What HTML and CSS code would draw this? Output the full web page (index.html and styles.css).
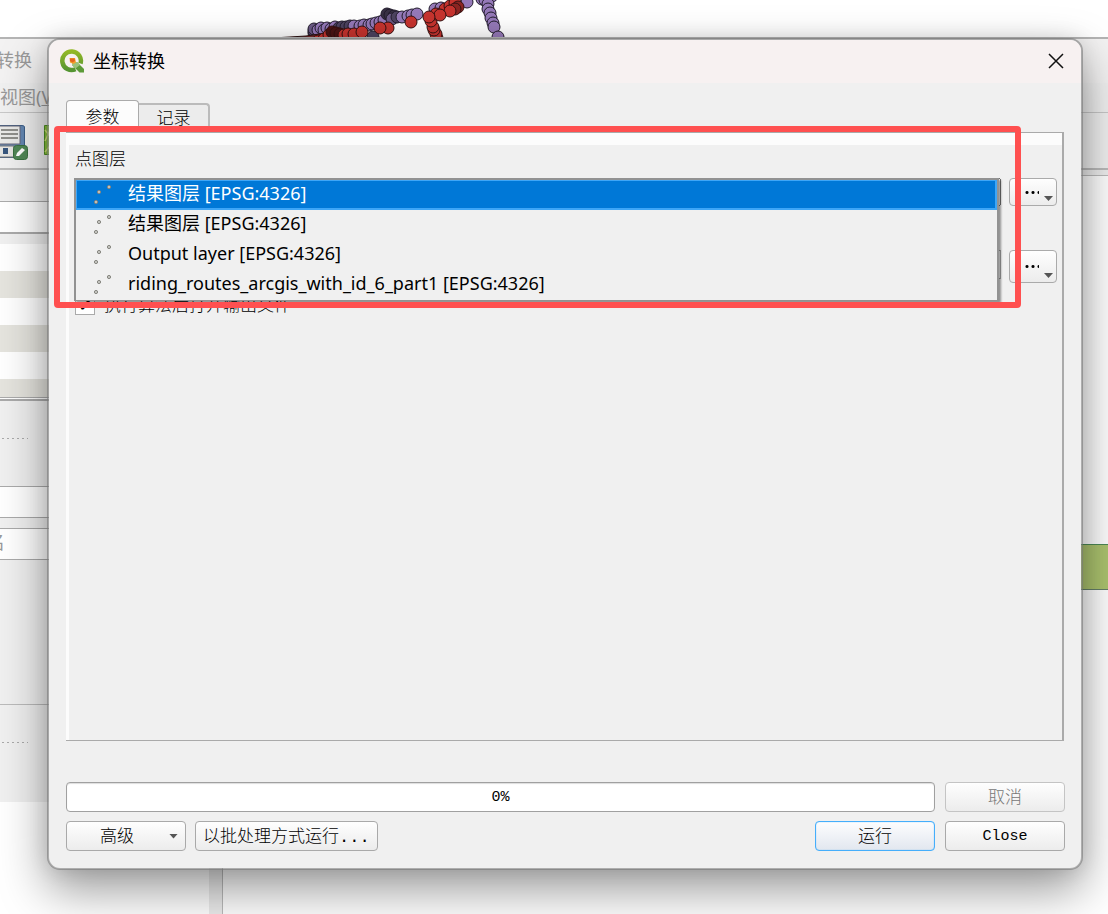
FILE: index.html
```html
<!DOCTYPE html>
<html lang="zh-CN">
<head>
    <meta charset="UTF-8">
    <meta name="viewport" content="width=device-width, initial-scale=1.0">
    <title>坐标转换</title>
    <link rel="stylesheet" href="styles.css">
</head>
<body>
    <div class="desktop">
        <div class="map-strip">
            <svg class="map-points" width="270" height="38" viewBox="0 0 270 38">
                <g fill="#9579b8" stroke="#221c2c" stroke-width="1">
                    <circle cx="113" cy="37" r="6" fill="#4d4360"/>
                    <circle cx="54" cy="33" r="6" fill="#6b5a86"/><circle cx="54" cy="31" r="6" fill="#6b5a86"/><circle cx="54" cy="29" r="6" fill="#6b5a86"/><circle cx="58" cy="30" r="6"/><circle cx="61" cy="28" r="6"/><circle cx="64" cy="30" r="6"/><circle cx="67" cy="28" r="6"/><circle cx="71" cy="29" r="6"/>
                    <circle cx="75" cy="27" r="6"/><circle cx="79" cy="28" r="6" fill="#4d4360"/><circle cx="82" cy="27" r="6" fill="#4d4360"/><circle cx="86" cy="27" r="6" fill="#4d4360"/><circle cx="90" cy="26" r="6" fill="#4d4360"/><circle cx="94" cy="26" r="6"/><circle cx="100" cy="26" r="6"/><circle cx="104" cy="25" r="6"/>
                    <circle cx="109" cy="25" r="6"/><circle cx="112" cy="24" r="6"/><circle cx="116" cy="23" r="6"/><circle cx="120" cy="22" r="6"/><circle cx="124" cy="20" r="6"/>
                    <circle cx="127" cy="14" r="6" fill="#383044"/><circle cx="130" cy="15" r="6" fill="#383044"/><circle cx="134" cy="16" r="6" fill="#383044"/><circle cx="132" cy="19" r="6" fill="#6b5a86"/><circle cx="137" cy="17" r="6" fill="#4d4360"/><circle cx="142" cy="17" r="6"/><circle cx="148" cy="16" r="6"/><circle cx="152" cy="15" r="6"/><circle cx="157" cy="14" r="6"/>
                    <circle cx="175" cy="9" r="6"/><circle cx="181" cy="8" r="6"/><circle cx="207" cy="2" r="6"/>
                    <circle cx="232" cy="-4" r="6"/><circle cx="222" cy="-1" r="6"/><circle cx="225" cy="0" r="6"/><circle cx="228" cy="4" r="6"/><circle cx="228" cy="9" r="6"/><circle cx="230" cy="13" r="6"/><circle cx="231" cy="18" r="6"/><circle cx="233" cy="23" r="6"/><circle cx="234" cy="27" r="6"/><circle cx="238" cy="37" r="6"/>
                </g>
                <path d="M13 38 46 36 66 33 66 38Z" fill="#782c2c" stroke="#2a1212"/>
                <g fill="#c6342f" stroke="#351111" stroke-width="1">
                    <circle cx="58" cy="41" r="6"/><circle cx="64" cy="39" r="6"/><circle cx="69" cy="35" r="6"/><circle cx="72" cy="32" r="6" fill="#4b1414"/><circle cx="76" cy="33" r="6" fill="#4b1414"/><circle cx="80" cy="34" r="6" fill="#4b1414"/>
                    <circle cx="84" cy="35" r="6"/><circle cx="88" cy="34" r="6"/><circle cx="94" cy="34" r="6"/><circle cx="102" cy="32" r="6"/><circle cx="128" cy="28" r="6"/><circle cx="120" cy="28" r="6"/><circle cx="151" cy="22" r="6"/>
                    <circle cx="177" cy="38" r="6"/><circle cx="176" cy="34" r="6"/><circle cx="174" cy="30" r="6"/><circle cx="173" cy="27" r="6"/><circle cx="171" cy="21" r="6"/>
                    <circle cx="185" cy="9" r="6"/><circle cx="190" cy="6" r="6"/><circle cx="195" cy="3" r="6"/><circle cx="198" cy="7" r="6" fill="#8c2522"/><circle cx="195" cy="9" r="6" fill="#8c2522"/><circle cx="176" cy="14" r="6"/><circle cx="190" cy="11" r="6"/><circle cx="180" cy="15" r="6"/><circle cx="169" cy="17" r="6"/>
                </g>
            </svg>
        </div>
        <div class="app-window">
            <div class="app-title">转换</div>
            <div class="app-menu">视图(<u>V</u>)</div>
            <div class="app-toolbar">
                <svg class="save-icon" width="28" height="36" viewBox="0 0 28 36">
                    <path d="M-4 .5H22Q24.500 .5 24.500 2V30Q24.500 32.500 21 32.500H-4Z" fill="#6487b2" stroke="#3d5f88"/>
                    <path d="M-2 1H20V19H-2Z" fill="#e9e9e7" stroke="#667"/>
                    <path d="M1 5H18M1 9H18M1 13H18" stroke="#71716d" stroke-width="1.500"/>
                    <path d="M-2 21H14V32H-2Z" fill="#e5e5e2" stroke="#777"/>
                    <path d="M3 23H8V29H3Z" fill="#38577d"/>
                    <rect x="13.500" y="20.500" width="14" height="14" rx="3" fill="#508756" stroke="#39713f"/>
                    <path d="M16 31 17 28 22 23 25 25 19 31Z" fill="#fff"/>
                </svg>
                <svg class="map-icon" width="16" height="30" viewBox="0 0 16 30">
                    <path d="M.5 .5H16V29.500H.5Z" fill="#8dc63f" stroke="#519322"/>
                    <path d="M1 5 10 16 1 27M1 16 8 1" fill="none" stroke="#d5e77c" stroke-width="1.500"/>
                </svg>
            </div>
            <div class="workspace">
                <div class="side">
                    <div class="side-head"></div>
                    <div class="side-field"></div>
                    <div class="side-list"></div>
                    <div class="side-block"><span class="dots"></span></div>
                    <div class="side-input"></div>
                    <div class="side-name">名</div>
                    <div class="side-empty"></div>
                    <div class="side-foot"><span class="dots"></span></div>
                </div>
                <div class="splitter"></div>
                <div class="canvas"><div class="map-area"></div></div>
            </div>
        </div>

        <div class="dialog" role="dialog" aria-labelledby="dialogTitle">
            <div class="dialog-header">
                <svg width="24" height="24" viewBox="0 0 24 24">
                    <defs>
                        <linearGradient id="ring" x1="0" y1="0" x2="0" y2="1">
                            <stop offset="0" stop-color="#93b827"/>
                            <stop offset="1" stop-color="#559431"/>
                        </linearGradient>
                    </defs>
                    <path d="M15.500 20.200A9.300 9.300 0 1 1 20.500 14.500" fill="none" stroke="url(#ring)" stroke-width="4.500"/>
                    <path d="M12.500 13H17L24 20V23.500H19.500L12.500 16.500Z" fill="#5d9a38"/>
                    <path d="M12.500 13H17L20 16 15.500 19.500 12.500 16.500Z" fill="#9cc27a"/>
                    <path d="M9.500 9H15L16 13.500 13.500 15 10 13.500Z" fill="#f3a02c"/>
                    <path d="M10 9.500H14.500L15 12 12.500 13.500 10 12Z" fill="#e2661f"/>
                </svg>
                <span class="dialog-title" id="dialogTitle">坐标转换</span>
                <button class="close-button" aria-label="关闭">
                    <svg width="16" height="16" viewBox="0 0 16 16"><path d="M1 1 15 15M15 1 1 15" stroke="#111" stroke-width="1.500"/></svg>
                </button>
            </div>

            <div class="dialog-body">
                <div class="tabs" role="tablist">
                    <button class="tab active" role="tab" aria-selected="true">参数</button>
                    <button class="tab" role="tab" aria-selected="false">记录</button>
                </div>

                <div class="panel">
                    <label class="field-label" for="layer">点图层</label>
                    <div class="field-row">
                        <div class="combo">
                            <select id="layer" class="combo-select">
                                <option>结果图层 [EPSG:4326]</option>
                            </select>
                            <ul class="options" role="listbox">
                                <li class="option selected" role="option" aria-selected="true"><svg class="point-icon" width="20" height="20" viewBox="0 0 20 20"><circle cx="3" cy="17" r="1.600"/><circle cx="6" cy="7" r="1.600"/><circle cx="16" cy="2" r="1.600"/></svg>结果图层 [EPSG:4326]</li>
                                <li class="option" role="option"><svg class="point-icon" width="20" height="20" viewBox="0 0 20 20"><circle cx="3" cy="17" r="1.600"/><circle cx="6" cy="7" r="1.600"/><circle cx="16" cy="2" r="1.600"/></svg>结果图层 [EPSG:4326]</li>
                                <li class="option" role="option"><svg class="point-icon" width="20" height="20" viewBox="0 0 20 20"><circle cx="3" cy="17" r="1.600"/><circle cx="6" cy="7" r="1.600"/><circle cx="16" cy="2" r="1.600"/></svg>Output layer [EPSG:4326]</li>
                                <li class="option" role="option"><svg class="point-icon" width="20" height="20" viewBox="0 0 20 20"><circle cx="3" cy="17" r="1.600"/><circle cx="6" cy="7" r="1.600"/><circle cx="16" cy="2" r="1.600"/></svg>riding_routes_arcgis_with_id_6_part1 [EPSG:4326]</li>
                            </ul>
                        </div>
                        <button class="more-button" aria-label="更多"><span class="more-dots"></span><span class="arrow"></span></button>
                    </div>
                    <div class="field-row output-row">
                        <input type="text" class="output-input" aria-label="输出">
                        <button class="more-button" aria-label="浏览"><span class="more-dots"></span><span class="arrow"></span></button>
                    </div>
                    <div class="check-row">
                        <input type="checkbox" id="openAfter" class="check" checked>
                        <label for="openAfter">执行算法后打开输出文件</label>
                    </div>
                </div>

                <div class="button-row">
                    <div class="progress" role="progressbar" aria-valuenow="0">0%</div>
                    <button class="button" disabled>取消</button>
                </div>
                <div class="button-row">
                    <button class="button menu-button">高级<span class="arrow"></span></button>
                    <button class="button batch-button">以批处理方式运行...</button>
                    <button class="button run-button">运行</button>
                    <button class="button latin">Close</button>
                </div>
            </div>
            <div class="highlight"></div>
        </div>
    </div>
</body>
</html>
```

FILE: styles.css
```css
* {
    box-sizing: border-box;
}
body {
    margin: 0;
    font-family: "Noto Sans", "Noto Sans CJK SC", sans-serif;
    font-size: 18px;
    color: #000;
}
button, input, select {
    font: inherit;
    color: inherit;
}
.desktop {
    position: relative;
    display: flex;
    flex-direction: column;
    min-height: 100vh;
    overflow: hidden;
    background-color: #fff;
}

/* main window behind the dialog */
.map-strip {
    height: 37px;
    padding-left: 260px;
    overflow: hidden;
}
.map-points {
    display: block;
}
.app-window {
    flex: 1;
    display: flex;
    flex-direction: column;
    border-top: 2px solid #b4b4b4;
    background-color: #f0f0f0;
    color: #999;
}
.app-title {
    height: 44px;
    line-height: 42px;
    background-color: #f3f2f2;
    text-indent: -4px;
}
.app-menu {
    height: 30px;
    line-height: 28px;
    border-bottom: 1px solid #c8c8c8;
}
.app-toolbar {
    display: flex;
    align-items: flex-start;
    gap: 16px;
    height: 57px;
    padding-top: 12px;
    border-bottom: 2px solid #bbb;
}
.workspace {
    flex: 1;
    display: flex;
}
.side {
    width: 209px;
    background-color: #fff;
}
.side-head {
    height: 32px;
    background-color: #f0f0f0;
    border-bottom: 1px solid #aaa;
}
.side-field {
    height: 32px;
    border-bottom: 2px solid #aaa;
}
.side-list {
    height: 164px;
    border-top: 10px solid #f0f0f0;
    border-bottom: 1px solid #aaa;
    background: repeating-linear-gradient(#fff 0 27px, #e5e4de 27px 54px);
}
.side-block {
    height: 88px;
    margin-top: 1px;
    padding-top: 37px;
    background-color: #f0f0f0;
    border-top: 2px solid #aaa;
    border-bottom: 1px solid #aaa;
}
.dots {
    display: block;
    width: 26px;
    height: 1px;
    margin-left: 2px;
    background: repeating-linear-gradient(90deg, #aaa 0 2px, transparent 2px 5px);
}
.side-input {
    height: 31px;
    border-bottom: 1px solid #aaa;
}
.side-name {
    height: 42px;
    line-height: 29px;
    border-top: 10px solid #f0f0f0;
    border-bottom: 1px solid #aaa;
    box-shadow: inset 0 1px #aaa;
    text-indent: -13px;
}
.side-empty {
    height: 145px;
    background-color: #f0f0f0;
    border-bottom: 1px solid #bbb;
}
.side-foot {
    height: 97px;
    padding-top: 37px;
    background-color: #f0f0f0;
}
.splitter {
    width: 13px;
    background-color: #ececec;
}
.canvas {
    flex: 1;
    border-left: 1px solid #bbb;
    border-top: 5px solid #eee;
    background-color: #fff;
    box-shadow: inset 0 1px #bbb;
    padding-top: 369px;
}
.map-area {
    height: 46px;
    background-color: #adc46f;
    border-top: 1px solid #4d8a56;
    border-bottom: 1px solid #66806a;
}

/* dialog */
.dialog {
    position: absolute;
    top: 38px;
    right: 25px;
    bottom: 44px;
    left: 47px;
    display: flex;
    flex-direction: column;
    border: 2px solid rgba(120, 120, 120, 0.6);
    border-radius: 13px;
    background-color: #f0f0f0;
    background-clip: padding-box;
    box-shadow: 0 20px 48px rgba(0, 0, 0, 0.4), 0 0 20px rgba(0, 0, 0, 0.1);
}
.dialog-header {
    display: flex;
    align-items: center;
    gap: 9px;
    height: 43px;
    padding: 0 17px 2px 11px;
    border-radius: 11px 11px 0 0;
    background-color: #f7f1f1;
}
.dialog-title {
    flex: 1;
    line-height: 24px;
}
.close-button {
    display: flex;
    padding: 0;
    border: none;
    background: none;
}
.dialog-body {
    flex: 1;
    display: flex;
    flex-direction: column;
    padding: 17px 16px 17px 17px;
    font-family: "Liberation Mono", "Noto Sans CJK SC", monospace;
    font-size: 17px;
    font-weight: 300;
}
.tabs {
    display: flex;
    align-items: flex-end;
    height: 32px;
}
.tab {
    width: 71px;
    height: 29px;
    padding: 2px 0 0;
    border: 2px solid #bbb;
    border-bottom: none;
    border-left: none;
    border-radius: 0 4px 0 0;
    background-color: #ececec;
    line-height: 26px;
}
.tab.active {
    width: 73px;
    height: 32px;
    padding-top: 4px;
    border: 1px solid #aaa;
    border-bottom: none;
    border-radius: 4px 4px 0 0;
    background-color: #fcfcfc;
}
.panel {
    flex: 1;
    margin: 0 1px 41px 0;
    padding: 1px 5px 0 6px;
    border-right: 2px solid #aaa;
    border-bottom: 1px solid #aaa;
    background: linear-gradient(#aaa, #aaa) 0 0 / 100% 1px no-repeat,
        linear-gradient(#fcfcfc, #fcfcfc) 0 0 / 100% 13px no-repeat,
        linear-gradient(#fcfcfc, #fcfcfc) 0 0 / 3px 100% no-repeat;
}
.field-label {
    display: block;
    margin-top: 16px;
    padding-left: 3px;
    line-height: 24px;
}
.field-row {
    display: flex;
    gap: 8px;
    margin-top: 5px;
    padding-left: 2px;
}
.combo {
    position: relative;
    flex: 1;
    display: flex;
}
.combo-select {
    width: 100%;
    height: 28px;
}
.options {
    position: absolute;
    z-index: 2;
    top: 0;
    left: 0;
    right: 0;
    margin: 0 2px 0 0;
    padding: 0;
    list-style: none;
    border: 2px solid #929292;
    border-bottom-width: 1px;
    background-color: #f0f0f0;
    box-shadow: 2px 2px 2px rgba(0, 0, 0, 0.4);
    font-family: "Noto Sans", "Noto Sans CJK SC", sans-serif;
    font-size: 18px;
    font-weight: 400;
    line-height: 26px;
}
.option {
    display: flex;
    gap: 15px;
    height: 30px;
    padding-left: 17px;
}
.option.selected {
    padding-left: 16px;
    border: solid #3ea6f7;
    border-width: 1px 2px 2px 1px;
    background-color: #0078d7;
    color: #fff;
    line-height: 24px;
}
.point-icon {
    margin-top: 5px;
    fill: #c9c9c5;
    stroke: #85857f;
}
.selected .point-icon {
    margin-top: 4px;
}
.more-button {
    display: flex;
    align-items: center;
    justify-content: flex-end;
    gap: 5px;
    width: 48px;
    height: 28px;
    padding: 0 3px;
    border: 1px solid #aaa;
    border-radius: 4px;
    background: linear-gradient(#fefefe, #ececec);
}
.more-dots {
    width: 15px;
    height: 3px;
    background: radial-gradient(circle, #000 1px, transparent 2px) 0 0 / 6px 3px;
}
.arrow {
    width: 9px;
    height: 5px;
    background-color: #555;
    clip-path: polygon(0 0, 100% 0, 50% 100%);
}
.more-button .arrow {
    align-self: flex-end;
    margin-bottom: 4px;
}
.output-row {
    margin-top: 44px;
}
.output-row .more-button {
    height: 33px;
}
.output-input {
    flex: 1;
    min-width: 0;
    height: 29px;
    border: 1px solid #aaa;
}
.check-row {
    display: flex;
    align-items: center;
    gap: 9px;
    height: 24px;
    margin-top: 8px;
    padding-left: 3px;
}
.check {
    appearance: none;
    display: flex;
    justify-content: center;
    width: 20px;
    height: 20px;
    margin: 4px 0 0;
    border: 1px solid #aaa;
    background-color: #fff;
}
.check::before {
    content: "✔";
    line-height: 18px;
    font-family: "DejaVu Sans", sans-serif;
    font-size: 18px;
}
.button-row {
    display: flex;
    gap: 10px;
}
.button-row + .button-row {
    margin-top: 9px;
}
.button {
    display: flex;
    align-items: center;
    justify-content: center;
    width: 120px;
    height: 30px;
    padding: 0 0 4px;
    border: 1px solid #a9a9a9;
    border-radius: 4px;
    background: linear-gradient(#fefefe, #ececec);
}
.button:disabled {
    border-color: #c4c4c4;
    color: #777;
}
.menu-button {
    justify-content: flex-end;
    gap: 35px;
    padding-right: 7px;
}
.menu-button .arrow {
    margin-top: 4px;
}
.batch-button {
    width: auto;
    margin-left: -1px;
    padding: 0 7px 4px;
}
.run-button {
    margin-left: auto;
    border-color: #45aefb;
    box-shadow: inset 0 0 1px #45aefb;
    background: linear-gradient(#fdfdfe, #e2e7ef);
}
.latin, .progress {
    padding: 0;
    font-size: 15px;
    font-weight: 400;
}
.progress {
    flex: 1;
    height: 30px;
    line-height: 29px;
    border: 1px solid #a0a0a0;
    border-radius: 4px;
    background-color: #fff;
    box-shadow: inset 0 1px 1px #ddd;
    text-align: center;
}

/* red marker frame over the layer list */
.highlight {
    position: absolute;
    z-index: 3;
    top: 86px;
    left: 5px;
    right: 60px;
    height: 182px;
    border: 6px solid #ff5050;
    border-radius: 4px;
    pointer-events: none;
}
```
